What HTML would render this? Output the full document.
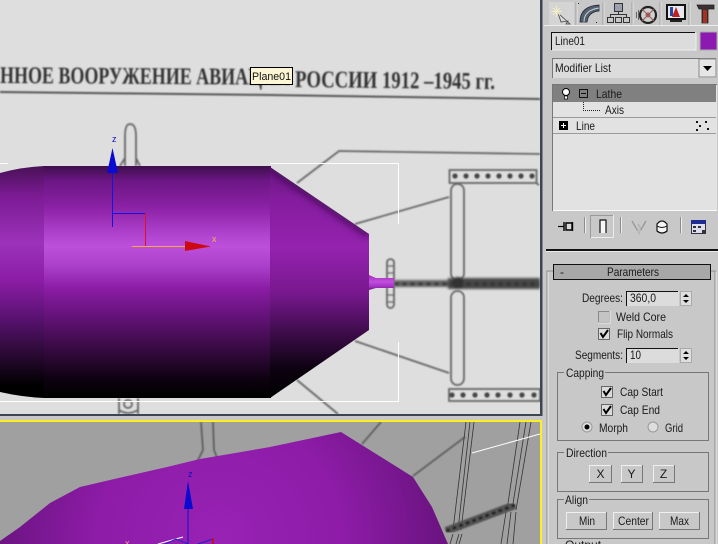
<!DOCTYPE html>
<html>
<head>
<meta charset="utf-8">
<style>
html,body{margin:0;padding:0;background:#c8c8c8;width:718px;height:544px;overflow:hidden}
svg{display:block}
.p{font-family:"Liberation Sans",sans-serif;font-size:12px;fill:#1a1a1a}
</style>
</head>
<body>
<svg width="718" height="544" viewBox="0 0 718 544" xmlns="http://www.w3.org/2000/svg">
<defs>
<filter id="b1" x="-5%" y="-5%" width="110%" height="110%"><feGaussianBlur stdDeviation="0.7"/></filter>
<filter id="b3" x="-5%" y="-20%" width="110%" height="140%"><feGaussianBlur stdDeviation="1.2"/></filter>
<filter id="b2" x="-20%" y="-20%" width="140%" height="140%"><feGaussianBlur stdDeviation="4"/></filter>
<linearGradient id="body" gradientUnits="userSpaceOnUse" x1="0" y1="167" x2="0" y2="397">
<stop offset="0" stop-color="#40104f"/><stop offset=".06" stop-color="#6c1684"/><stop offset=".17" stop-color="#8a20a4"/><stop offset=".3" stop-color="#b245d0"/><stop offset=".345" stop-color="#bd50da"/><stop offset=".43" stop-color="#ab40ca"/><stop offset=".53" stop-color="#8a1ca4"/><stop offset=".66" stop-color="#601274"/><stop offset=".8" stop-color="#340a3e"/><stop offset=".92" stop-color="#0e0211"/><stop offset="1" stop-color="#000"/>
</linearGradient>
<linearGradient id="left" gradientUnits="userSpaceOnUse" x1="0" y1="167" x2="0" y2="397">
<stop offset="0" stop-color="#4a1258"/><stop offset=".12" stop-color="#7a1a92"/><stop offset=".33" stop-color="#9c32ba"/><stop offset=".5" stop-color="#8a1ca4"/><stop offset=".66" stop-color="#581270"/><stop offset=".8" stop-color="#2e0a38"/><stop offset=".95" stop-color="#000"/>
</linearGradient>
<linearGradient id="cone" gradientUnits="userSpaceOnUse" x1="0" y1="167" x2="0" y2="397">
<stop offset="0" stop-color="#661680"/><stop offset=".14" stop-color="#841c9e"/><stop offset=".35" stop-color="#9422ae"/><stop offset=".55" stop-color="#78188e"/><stop offset=".72" stop-color="#3e0c4a"/><stop offset=".88" stop-color="#0c0210"/><stop offset="1" stop-color="#000"/>
</linearGradient>
<linearGradient id="noz" x1="0" y1="0" x2="0" y2="1">
<stop offset="0" stop-color="#a02cbc"/><stop offset=".45" stop-color="#c24ede"/><stop offset=".8" stop-color="#a030c0"/><stop offset="1" stop-color="#5e1272"/>
</linearGradient>
<radialGradient id="low" gradientUnits="userSpaceOnUse" cx="220" cy="540" r="220">
<stop offset="0" stop-color="#9822b4"/><stop offset=".55" stop-color="#8e1ca8"/><stop offset="1" stop-color="#6c1482"/>
</radialGradient>
<clipPath id="coneclip"><polygon points="270,167 369,234 369,330 270,398"/></clipPath>
<clipPath id="lowclip"><rect x="0" y="422" width="540" height="122"/></clipPath>
</defs>

<rect width="718" height="544" fill="#c8c8c8"/>

<!-- top viewport -->
<rect x="0" y="0" width="540" height="414" fill="#dedede"/>
<g filter="url(#b1)">
<text x="0" y="83" font-family="Liberation Serif,serif" font-weight="bold" font-size="24" fill="#333" textLength="290" lengthAdjust="spacingAndGlyphs" transform="rotate(0.35 0 83)">ННОЕ ВООРУЖЕНИЕ АВИАЦИИ</text>
<text x="295" y="87" font-family="Liberation Serif,serif" font-weight="bold" font-size="24" fill="#333" textLength="200" lengthAdjust="spacingAndGlyphs" transform="rotate(0.6 295 87)">РОССИИ 1912 –1945 гг.</text>
<path d="M0 92 L270 95 L540 99" stroke="#555" stroke-width="2" fill="none"/>
<g fill="none" stroke="#666" stroke-width="1.800">
<path d="M297 183 L339 151 L540 154"/>
<path d="M355 224 L449 197"/>
<path d="M355 341 L449 373"/>
<path d="M297 380 L338 414"/>
<rect x="449.500" y="170" width="87" height="13"/>
<path d="M536 183 L539 185"/>
<rect x="449" y="389" width="91" height="12"/>
<rect x="451" y="184" width="13" height="96" rx="6.500"/>
<rect x="451" y="291" width="13" height="94" rx="6.500"/>
<rect x="387" y="259" width="7" height="49" rx="3.500"/>
<path d="M387 266 H394 M387 273 H394 M387 295 H394 M387 302 H394" stroke-width="1.200"/>
<path d="M125 166 V136 Q125 124 130 124 Q136 124 136 136 V166 M120 166 L125 158 M140 166 L136 158"/>
<path d="M119 414 V398 M138 414 V398 M119 410 Q128 416 138 410"/>
<circle cx="128" cy="404" r="4"/>
</g>
<g fill="#444"><circle cx="455" cy="176" r="2.600"/><circle cx="466" cy="176" r="2.600"/><circle cx="477" cy="176" r="2.600"/><circle cx="488" cy="176" r="2.600"/><circle cx="499" cy="176" r="2.600"/><circle cx="510" cy="176" r="2.600"/><circle cx="521" cy="176" r="2.600"/><circle cx="532" cy="176" r="2.600"/>
<circle cx="452" cy="395" r="2.600"/><circle cx="463" cy="395" r="2.600"/><circle cx="475" cy="395" r="2.600"/><circle cx="487" cy="395" r="2.600"/><circle cx="498" cy="395" r="2.600"/><circle cx="510" cy="395" r="2.600"/><circle cx="522" cy="395" r="2.600"/><circle cx="534" cy="395" r="2.600"/></g>
</g>
<g filter="url(#b3)">
<rect x="394" y="280" width="56" height="7" fill="#666"/>
<rect x="448" y="278" width="92" height="11" fill="#4a4a4a"/>
<path d="M394 284 H540" stroke="#2a2a2a" stroke-width="3" stroke-dasharray="5 3"/>
<circle cx="458" cy="283" r="6" fill="#333"/>
</g>

<!-- purple body -->
<path d="M0 173 Q22 167 44 166 L44 398 Q22 397 0 392 Z" fill="url(#left)"/>
<rect x="44" y="166" width="227" height="232" fill="url(#body)"/>
<polygon points="270,167 369,234 369,330 270,398" fill="url(#cone)"/>
<path d="M270 167 L369 234" stroke="#3a0c48" stroke-width="6" fill="none" clip-path="url(#coneclip)" filter="url(#b2)"/>
<polygon points="369,275 376,278 394,278 394,288 376,288 369,290" fill="url(#noz)"/>

<!-- selection brackets -->
<g stroke="#fff" stroke-width="1" fill="none">
<path d="M270 163.500 H398.500 V224"/>
<path d="M398.500 342 V401.500 H0"/>
<path d="M0 163.500 H8"/>
</g>

<!-- gizmo -->
<g>
<path d="M112.500 172 V227 M112.500 213.500 H145" stroke="#1414e0" stroke-width="1" fill="none"/>
<path d="M145.500 213 V246" stroke="#e01020" stroke-width="1" fill="none"/>
<polygon points="112.500,148 107,173 118,173" fill="#0a0ad0"/>
<path d="M132 246.500 H186" stroke="#f6a840" stroke-width="1" fill="none"/>
<polygon points="185,241 211,246.500 185,251" fill="#cc0a14"/>
<text x="112" y="142" font-family="Liberation Sans,sans-serif" font-size="9" fill="#1010c0">z</text>
<text x="212" y="242" font-family="Liberation Sans,sans-serif" font-size="9" fill="#ffb050">x</text>
</g>

<!-- tooltip -->
<rect x="250.500" y="67.500" width="42" height="17" fill="#fdf6d4" stroke="#000"/>
<text x="252" y="80" font-family="Liberation Sans,sans-serif" font-size="11" fill="#111" textLength="39" lengthAdjust="spacingAndGlyphs">Plane01</text>

<!-- viewport separator -->
<rect x="0" y="414" width="542" height="2" fill="#3b4650"/>
<rect x="540" y="0" width="2.500" height="416" fill="#3b4650"/>
<rect x="0" y="416" width="543" height="4" fill="#c8c8c8"/>

<!-- bottom viewport -->
<rect x="0" y="420" width="542" height="124" fill="#ffee22"/>
<rect x="0" y="422" width="540" height="122" fill="#a0a0a0"/>
<g clip-path="url(#lowclip)">
<g filter="url(#b1)" fill="none" stroke="#555" stroke-width="1.600">
<path d="M362 444 L381 422"/>
<path d="M413 476 L465 437"/>
<path d="M201 422 L203 450 L197 462 M213 422 L214 450 L218 460"/>
</g>
<g fill="none" stroke="#333" stroke-width=".8">
<path d="M466 422 L453 530 M470 422 L458 530 M474 422 L461 530 M453 534 L450 544 M459 534 L456 544 M462 534 L459 544"/>
<path d="M520 422 L507 510 M526 422 L512 510 M531 422 L516 510 M506 512 L501 544 M511 512 L507 544 M516 512 L513 544"/>
</g>
<g filter="url(#b1)">
<path d="M446 531 L515 505" stroke="#555" stroke-width="8"/>
<path d="M446 531 L515 505" stroke="#222" stroke-width="3" stroke-dasharray="4 3"/>
</g>
<path d="M472 453 L540 434" stroke="#fff" stroke-width="1"/>
<polygon points="0,544 0,541 20,527 50,503 80,487 110,480 167,467 200,459 270,447 341,432 413,477 432,507 448,544" fill="url(#low)"/>
<path d="M188 509 V544" stroke="#1010d0" stroke-width="1"/>
<polygon points="188,481 184,509 193,509" fill="#0a0ad0"/>
<text x="188" y="477" font-family="Liberation Sans,sans-serif" font-size="9" fill="#1010c0">z</text>
<path d="M158 544 L183 537" stroke="#fff" stroke-width="1"/>
<path d="M165 544 L176 539 L188 544 M198 544 L213 539" stroke="#2020c0" stroke-width="1" fill="none"/>
<path d="M213 538 V544" stroke="#c01030" stroke-width="2"/>
<text x="125" y="546" font-family="Liberation Sans,sans-serif" font-size="9" fill="#f4a0a0">x</text>
</g>

<!-- panel tabs -->
<rect x="549" y="2" width="25" height="23" fill="#d4d4d4"/>
<path d="M577 2 V25 M604 2 V25 M633 2 V25 M661 2 V25 M690 2 V25" stroke="#e4e4e4"/>
<path d="M576 2 V25 M603 2 V25 M632 2 V25 M660 2 V25 M689 2 V25" stroke="#a0a0a0"/>
<path d="M544 25.500 H718" stroke="#ececec"/>
<!-- create: wand / pointer -->
<path d="M558 13 L570 24 L566 24 L568 21 L561 22 Z" fill="#d8d8d8" stroke="#444" stroke-width=".8"/>
<path d="M553 8 L560 15 M560 8 L553 15 M556.500 6 V17 M551 11.500 H562" stroke="#f2eec4" stroke-width="1.100"/>
<!-- modify -->
<path d="M580 22 Q580 6 599 5 L599 11 Q588 12 587 22 Z" fill="#50606c" stroke="#223" stroke-width=".8"/>
<path d="M584 22 Q584 10 599 8" stroke="#c8d0d8" fill="none"/>
<g fill="#222"><rect x="578" y="3" width="1" height="1"/><rect x="596" y="22" width="1" height="1"/></g>
<!-- hierarchy -->
<g fill="none" stroke="#333"><rect x="614.500" y="3.500" width="8" height="8" fill="#9aa0b0"/><rect x="607.500" y="17.500" width="6" height="5"/><rect x="615.500" y="17.500" width="6" height="5"/><rect x="623.500" y="17.500" width="6" height="5"/><path d="M618.500 11 V15 M610.500 17 V14.500 H626.500 V17"/></g>
<!-- motion -->
<circle cx="648" cy="15" r="8" fill="#cfcfcf" stroke="#222" stroke-width="2.200"/><circle cx="648" cy="15" r="2.500" fill="#a86060"/><path d="M642 9 L654 21 M654 9 L642 21" stroke="#955"/>
<path d="M638.500 10 V20 M636.500 12 V18" stroke="#666"/>
<!-- display -->
<rect x="667" y="5" width="18" height="14" fill="#e8e8f0" stroke="#111" stroke-width="2"/><polygon points="672,17 676,7 680,17" fill="#c02020"/><rect x="670" y="7" width="3" height="9" fill="#2848a0"/><rect x="670" y="20" width="12" height="2" fill="#222"/>
<!-- utilities hammer -->
<path d="M697 5 H714 L714 9 H708 V23 H702 V9 H699 Z" fill="#3a3030" stroke="#222" stroke-width=".8"/>
<rect x="703" y="10" width="4" height="13" fill="#a83020"/>

<!-- name -->
<rect x="551" y="32" width="145" height="18" fill="#dcdcdc"/>
<path d="M551.500 50 V32.500 H695" fill="none" stroke="#111"/>
<path d="M552 50 H696 V33" fill="none" stroke="#eee"/>
<text x="555" y="45" class="p" textLength="30" lengthAdjust="spacingAndGlyphs">Line01</text>
<rect x="700" y="32" width="17" height="18" fill="#8d1ab0" stroke="#aaa"/>

<!-- modifier list -->
<rect x="552" y="58" width="165" height="20" fill="#dcdcdc"/>
<path d="M552.500 78 V58.500 H716" fill="none" stroke="#777"/>
<text x="555" y="72" class="p" textLength="56" lengthAdjust="spacingAndGlyphs">Modifier List</text>
<rect x="699" y="59" width="17" height="18" fill="#e6e6e6" stroke="#888"/>
<polygon points="703,66 712,66 707.500,71" fill="#000"/>

<!-- stack -->
<rect x="552" y="84" width="165" height="127" fill="#e2e2e2"/>
<path d="M552.500 211 V84.500 H717" fill="none" stroke="#777"/>
<path d="M553 210.500 H717" stroke="#fafafa"/>
<rect x="553" y="85" width="163" height="17" fill="#808080"/>
<rect x="553" y="117" width="163" height="1" fill="#9a9a9a"/>
<rect x="553" y="133" width="163" height="1" fill="#9a9a9a"/>
<ellipse cx="566" cy="92" rx="3.500" ry="3.500" fill="#fff" stroke="#000"/><rect x="564.500" y="96" width="3" height="3" fill="#fff" stroke="#000" stroke-width=".7"/>
<rect x="579.500" y="89.500" width="8" height="8" fill="none" stroke="#111"/><path d="M581 93.500 H586" stroke="#111"/>
<text x="596" y="98" class="p" textLength="26" lengthAdjust="spacingAndGlyphs">Lathe</text>
<path d="M583.500 102 V110.500 H600" stroke="#222" stroke-dasharray="1 1" fill="none"/>
<text x="605" y="114" class="p" textLength="19" lengthAdjust="spacingAndGlyphs">Axis</text>
<rect x="559" y="121" width="9" height="9" fill="#000"/><path d="M561 125.500 H566 M563.500 123 V128" stroke="#fff"/>
<text x="576" y="130" class="p" textLength="19" lengthAdjust="spacingAndGlyphs">Line</text>
<g fill="#111"><rect x="696" y="121" width="2" height="2"/><rect x="705" y="121" width="2" height="2"/><rect x="699" y="125" width="2" height="2"/><rect x="707" y="128" width="2" height="2"/><rect x="696" y="129" width="2" height="2"/></g>

<!-- stack toolbar -->
<path d="M558 226.500 H564" stroke="#000" stroke-width="1.200"/>
<path d="M564 222 V231 M566 223 H572 V230 H566 Z M572.500 222 V231" stroke="#000" stroke-width="1.400" fill="#d8d8d8"/>
<path d="M584.500 217 V233 M620.500 217 V233 M680.500 217 V233" stroke="#8c8c8c"/>
<path d="M585.500 217 V233 M621.500 217 V233 M681.500 217 V233" stroke="#eee"/>
<path d="M590.500 238 V215.500 H613" fill="none" stroke="#9a9a9a"/><path d="M591 237.500 H613.500 V215" fill="none" stroke="#ececec"/>
<rect x="600" y="220" width="6" height="13" fill="#f6f6f6"/>
<path d="M599.500 220 H606.500 M600 220 V233 M606 220 V233" stroke="#111" fill="none" stroke-width="1.200"/>
<path d="M632 221 L639 233 L646 221" stroke="#999" fill="none" stroke-width="1.400"/><circle cx="639" cy="231" r="2" fill="#bbb"/><path d="M638 224 L641 229" stroke="#aaa"/>
<path d="M657 224 Q662 218 667 224 V231 Q662 235 657 231 Z" fill="#f4f4f4" stroke="#111" stroke-width="1.200"/><path d="M657 226 Q662 229 667 226" stroke="#111" fill="none"/>
<rect x="691.500" y="220.500" width="14" height="13" fill="#dde" stroke="#334"/><rect x="691" y="220" width="15" height="4" fill="#1c2c90"/><g fill="#333"><rect x="693" y="226" width="3" height="2"/><rect x="698" y="226" width="3" height="2"/><rect x="702" y="230" width="4" height="3"/><rect x="693" y="230" width="3" height="2"/></g>

<!-- separator -->
<rect x="546" y="249" width="172" height="2" fill="#111"/>
<rect x="546" y="251" width="172" height="1" fill="#ececec"/>

<!-- rollout -->
<path d="M547 544 V271 H554 M711 271 H715 V544" fill="none" stroke="#8e8e8e"/>
<path d="M548 544 V272 M716 272 V544" fill="none" stroke="#ececec"/>
<rect x="553.500" y="264.500" width="157" height="15" fill="#a8a8a8" stroke="#111"/>
<text x="560" y="276" class="p">-</text>
<text x="607" y="276" class="p" textLength="52" lengthAdjust="spacingAndGlyphs">Parameters</text>

<text x="582" y="302" class="p" textLength="41" lengthAdjust="spacingAndGlyphs">Degrees:</text>
<rect x="626" y="291" width="53" height="15" fill="#dcdcdc"/><path d="M626.500 306 V291.500 H678" fill="none" stroke="#111"/>
<text x="630" y="302" class="p" textLength="26" lengthAdjust="spacingAndGlyphs">360,0</text>
<rect x="680.500" y="291.500" width="11" height="14" fill="#dedede" stroke="#aaa"/><path d="M683 297 H689 L686 294 Z M683 300 H689 L686 303 Z" fill="#000"/>

<rect x="598.500" y="311.500" width="11" height="11" fill="#c4c4c4" stroke="#8a8a8a"/>
<path d="M610 311 V323 H598" fill="none" stroke="#efefef"/>
<text x="616" y="321" class="p" textLength="50" lengthAdjust="spacingAndGlyphs">Weld Core</text>
<rect x="598.500" y="328.500" width="11" height="11" fill="#dcdcdc" stroke="#666"/>
<path d="M600.500 333 L603 337 L608 330" fill="none" stroke="#000" stroke-width="2"/>
<text x="617" y="338" class="p" textLength="56" lengthAdjust="spacingAndGlyphs">Flip Normals</text>

<text x="575" y="359" class="p" textLength="48" lengthAdjust="spacingAndGlyphs">Segments:</text>
<rect x="626" y="348" width="53" height="15" fill="#dcdcdc"/><path d="M626.500 363 V348.500 H678" fill="none" stroke="#111"/>
<text x="630" y="359" class="p" textLength="11" lengthAdjust="spacingAndGlyphs">10</text>
<rect x="680.500" y="348.500" width="11" height="14" fill="#dedede" stroke="#aaa"/><path d="M683 354 H689 L686 351 Z M683 357 H689 L686 360 Z" fill="#000"/>

<!-- Capping -->
<path d="M564 372.500 H557.500 V440.500 H708.500 V372.500 H605" fill="none" stroke="#777"/>
<text x="566" y="377" class="p" textLength="38" lengthAdjust="spacingAndGlyphs">Capping</text>
<rect x="601.500" y="386.500" width="11" height="11" fill="#dcdcdc" stroke="#666"/>
<path d="M603.500 391 L606 395 L611 388" fill="none" stroke="#000" stroke-width="2"/>
<text x="620" y="396" class="p" textLength="43" lengthAdjust="spacingAndGlyphs">Cap Start</text>
<rect x="601.500" y="404.500" width="11" height="11" fill="#dcdcdc" stroke="#666"/>
<path d="M603.500 409 L606 413 L611 406" fill="none" stroke="#000" stroke-width="2"/>
<text x="620" y="414" class="p" textLength="40" lengthAdjust="spacingAndGlyphs">Cap End</text>
<circle cx="587" cy="427" r="5" fill="#dedede" stroke="#999"/><circle cx="587" cy="427" r="2.500" fill="#000"/>
<text x="599" y="432" class="p" textLength="29" lengthAdjust="spacingAndGlyphs">Morph</text>
<circle cx="653" cy="427" r="5" fill="#dedede" stroke="#999"/>
<text x="665" y="432" class="p" textLength="18" lengthAdjust="spacingAndGlyphs">Grid</text>

<!-- Direction -->
<path d="M564 452.500 H557.500 V491.500 H708.500 V452.500 H608" fill="none" stroke="#777"/>
<text x="566" y="457" class="p" textLength="41" lengthAdjust="spacingAndGlyphs">Direction</text>
<g fill="#c8c8c8" stroke="#777">
<rect x="589.500" y="465.500" width="22" height="17"/><rect x="621.500" y="465.500" width="21" height="17"/><rect x="653.500" y="465.500" width="21" height="17"/>
<rect x="566.500" y="512.500" width="40" height="17"/><rect x="613.500" y="512.500" width="39" height="17"/><rect x="659.500" y="512.500" width="40" height="17"/>
</g>
<g stroke="#efefef" fill="none">
<path d="M589.500 482 V465.500 H611"/><path d="M621.500 482 V465.500 H642"/><path d="M653.500 482 V465.500 H674"/>
<path d="M566.500 529 V512.500 H606"/><path d="M613.500 529 V512.500 H652"/><path d="M659.500 529 V512.500 H699"/>
</g>
<text x="600.500" y="478" class="p" text-anchor="middle">X</text>
<text x="631.500" y="478" class="p" text-anchor="middle">Y</text>
<text x="663.500" y="478" class="p" text-anchor="middle">Z</text>

<!-- Align -->
<path d="M564 499.500 H557.500 V538.500 H708.500 V499.500 H589" fill="none" stroke="#777"/>
<text x="565" y="504" class="p" textLength="23" lengthAdjust="spacingAndGlyphs">Align</text>
<text x="579" y="525" class="p" textLength="16" lengthAdjust="spacingAndGlyphs">Min</text>
<text x="618" y="525" class="p" textLength="31" lengthAdjust="spacingAndGlyphs">Center</text>
<text x="670" y="525" class="p" textLength="19" lengthAdjust="spacingAndGlyphs">Max</text>

<text x="565" y="549" class="p">Output</text>
</svg>
</body>
</html>
